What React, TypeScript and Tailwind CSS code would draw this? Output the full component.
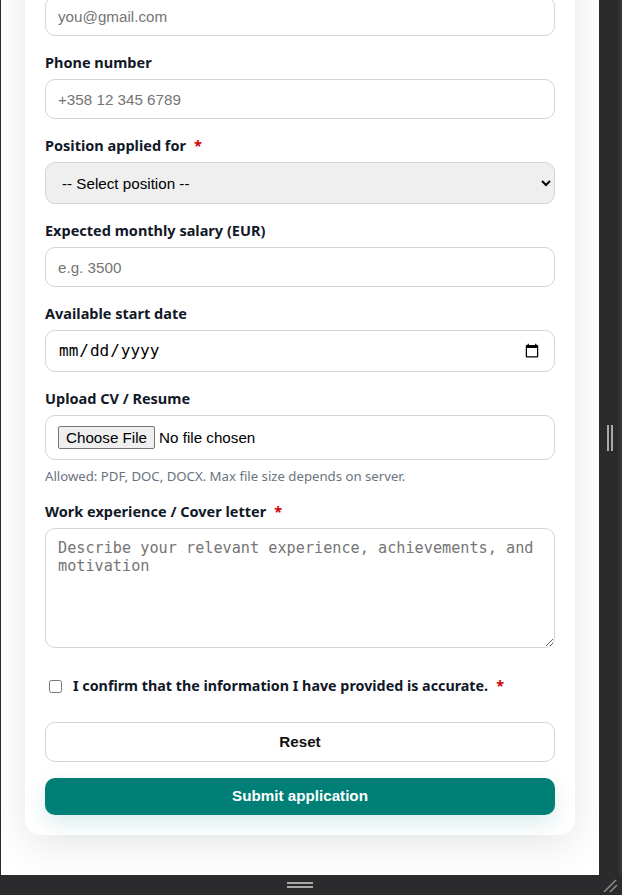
import React from "react";

const labelCls =
  "block text-[14.5px] leading-[20px] font-bold text-[#111827] mb-[7px] font-['Noto_Sans',sans-serif]";
const inputCls =
  "block w-full h-10 px-3 rounded-[10px] border border-[#d1d5db] bg-white text-[15.2px] text-[#111] font-['Liberation_Sans',Arial,sans-serif] placeholder:text-[#757575] outline-none";

function Req() {
  return <span className="ml-[8px] text-[#d10000]">*</span>;
}

export default function App() {
  return (
    <div className="w-[622px] h-[895px] bg-[#2b2b2d] flex flex-col overflow-hidden">
      <div className="flex flex-1 min-h-0 pl-px">
        <div className="w-[598px] bg-white overflow-hidden flex flex-col justify-end">
          <form className="mx-6 mb-10 bg-white rounded-2xl shadow-[0_10px_40px_rgba(15,23,42,0.10)] px-5 pt-6 pb-5 shrink-0">
            <div className="mb-4">
              <label className={labelCls}>
                Full name
                <Req />
              </label>
              <input className={inputCls} placeholder="Your full name" />
            </div>
            <div className="mb-4">
              <label className={labelCls}>
                Email address
                <Req />
              </label>
              <input className={inputCls} placeholder="you@gmail.com" />
            </div>
            <div className="mb-4">
              <label className={labelCls}>Phone number</label>
              <input className={inputCls} placeholder="+358 12 345 6789" />
            </div>
            <div className="mb-4">
              <label className={labelCls}>
                Position applied for
                <Req />
              </label>
              <select className="block w-full h-[42px] px-3 rounded-[10px] border border-[#d1d5db] bg-[#efefef] text-[15.2px] text-black font-['Liberation_Sans',Arial,sans-serif] outline-none">
                <option>-- Select position --</option>
                <option>Developer</option>
              </select>
            </div>
            <div className="mb-4">
              <label className={labelCls}>Expected monthly salary (EUR)</label>
              <input className={inputCls} placeholder="e.g. 3500" />
            </div>
            <div className="mb-4">
              <label className={labelCls}>Available start date</label>
              <input
                type="date"
                className="block w-full h-[42px] px-3 rounded-[10px] border border-[#d1d5db] bg-white text-[16px] text-black font-['DejaVu_Sans_Mono',monospace] outline-none"
              />
            </div>
            <div className="mb-4">
              <label className={labelCls}>Upload CV / Resume</label>
              <input
                type="file"
                className="block w-full h-[45px] px-3 py-[10px] rounded-[10px] border border-[#d1d5db] bg-white text-[15.2px] text-black font-['Liberation_Sans',Arial,sans-serif] outline-none file:mr-1 file:h-[23px] file:px-[7px] file:border file:border-[#767676] file:rounded-[2px] file:bg-[#efefef] file:text-black"
              />
              <p className="mt-[7px] text-[13.2px] leading-[18px] text-[#6b7280] font-['Noto_Sans',sans-serif]">
                Allowed: PDF, DOC, DOCX. Max file size depends on server.
              </p>
            </div>
            <div>
              <label className={labelCls}>
                Work experience / Cover letter
                <Req />
              </label>
              <textarea
                className="block w-full h-[120px] px-3 py-[10px] rounded-[10px] border border-[#d1d5db] bg-white text-[15.2px] leading-[18px] text-black font-['DejaVu_Sans_Mono',monospace] placeholder:text-[#757575] outline-none"
                placeholder="Describe your relevant experience, achievements, and motivation"
              />
            </div>
            <label className="mt-7 h-5 flex items-center gap-[11px] text-[14.3px] font-bold text-[#111827] font-['Noto_Sans',sans-serif]">
              <input type="checkbox" className="ml-1 w-[13px] h-[13px]" />
              <span>
                I confirm that the information I have provided is accurate.
                <Req />
              </span>
            </label>
            <div className="mt-[26px] flex flex-col gap-4">
              <button
                type="button"
                className="h-10 w-full rounded-[10px] border border-[#d1d5db] bg-white text-[15.2px] font-bold text-[#111] font-['Liberation_Sans',Arial,sans-serif]"
              >
                Reset
              </button>
              <button
                type="button"
                className="h-[37px] w-full rounded-[10px] bg-[#007f76] text-[15.2px] font-bold text-white font-['Liberation_Sans',Arial,sans-serif] shadow-[0_8px_20px_rgba(0,127,118,0.15)]"
              >
                Submit application
              </button>
            </div>
          </form>
        </div>
        <div className="flex-1 flex items-center justify-center border-r-[3px] border-[#343436]">
          <div className="flex gap-[2px] pl-[1px]">
            <div className="w-[2px] h-[26px] bg-[#a9a9a9]" />
            <div className="w-[2px] h-[26px] bg-[#a9a9a9]" />
          </div>
        </div>
      </div>
      <div className="h-5 flex shrink-0">
        <div className="w-[600px] flex flex-col items-center justify-center gap-[2px]">
          <div className="w-[26px] h-[2px] bg-[#a9a9a9]" />
          <div className="w-[26px] h-[2px] bg-[#a9a9a9]" />
        </div>
        <div className="flex-1 flex items-end justify-start pl-[3px] pb-[2px]">
          <svg width="16" height="16" viewBox="0 0 16 16">
            <line x1="1" y1="15" x2="13" y2="3" stroke="#8a8a8a" strokeWidth="1.6" />
            <line x1="7" y1="15" x2="14" y2="8" stroke="#8a8a8a" strokeWidth="1.6" />
          </svg>
        </div>
      </div>
    </div>
  );
}
